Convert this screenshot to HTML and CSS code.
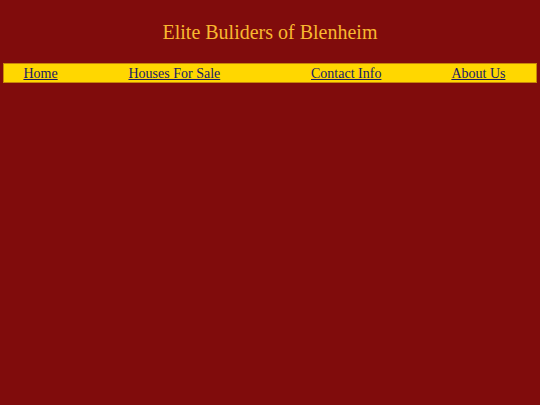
FILE: index.html
```html
<!DOCTYPE html>
<html>
<head>
<meta charset="utf-8">
<title>Elite Buliders of Blenheim</title>
<link rel="stylesheet" href="styles.css">
</head>
<body>
<h1 class="title">Elite Buliders of Blenheim</h1>
<table class="nav">
<tr>
<td><a href="#">Home</a></td>
<td><a href="#">Houses For Sale</a></td>
<td><a href="#">Contact Info</a></td>
<td><a href="#">About Us</a></td>
</tr>
</table>
</body>
</html>
```
FILE: styles.css
```css
html, body {
  margin: 0;
  padding: 0;
  background: #800c0c;
  font-family: "Liberation Serif", "Times New Roman", serif;
}
body {
  padding: 0 3px;
}
.title {
  margin: 0;
  padding-top: 21px;
  height: 42px;
  text-align: center;
  font-size: 20px;
  line-height: 23px;
  font-weight: normal;
  color: #f8b830;
}
.nav {
  width: 100%;
  border-collapse: collapse;
  background: #ffd700;
  border: 1px solid #c8860a;
}
.nav td {
  padding: 1px 0 0 0;
  height: 17px;
  text-align: center;
  font-size: 14px;
  line-height: 17px;
}
.nav a {
  color: #1a1a66;
}
```
